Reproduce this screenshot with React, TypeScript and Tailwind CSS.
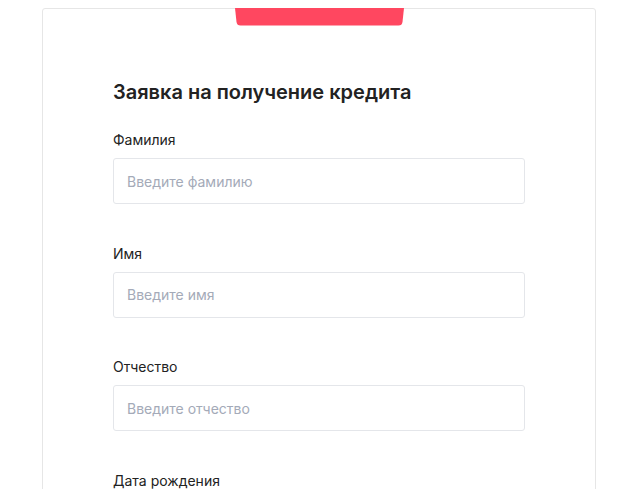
const FIELDS = [
  { label: "Фамилия", placeholder: "Введите фамилию" },
  { label: "Имя", placeholder: "Введите имя" },
  { label: "Отчество", placeholder: "Введите отчество" },
  { label: "Дата рождения", placeholder: "ДД.ММ.ГГГГ" },
];

function Field({ label, placeholder }: { label: string; placeholder: string }) {
  return (
    <div className="mb-[39.5px]">
      <label className="block text-[14px] leading-5 text-[#222]">{label}</label>
      <input
        type="text"
        placeholder={placeholder}
        className="mt-2 block h-[46px] w-[412px] rounded-[3px] border border-[#e4e6ea] bg-white px-[13px] text-[14px] text-[#2b2b2b] outline-none placeholder:text-[#a4aab8]"
      />
    </div>
  );
}

export default function App() {
  return (
    <div className="h-[489px] overflow-hidden bg-white" style={{ fontFamily: "Inter, 'Noto Sans', sans-serif" }}>
      <div className="ml-[42px] mt-2 w-[554px] border border-[#e6e6e6] rounded-t-[3px]">
        {/* red tab sits over the top border */}
        <div className="-mt-px flex justify-center">
          <svg width="169" height="18" viewBox="0 0 169 18" className="ml-px">
            <path d="M0 0 H169 L167.5 14 Q167 17.5 163.5 17.5 H5.5 Q2 17.5 1.5 14 Z" fill="#ff4760" />
          </svg>
        </div>
        <div className="px-[70px] pt-[52px]">
          <h1 className="text-[20px] leading-7 font-semibold text-[#222]">Заявка на получение кредита</h1>
          <div className="mt-6">
            {FIELDS.map((f) => (
              <Field key={f.label} {...f} />
            ))}
          </div>
        </div>
      </div>
    </div>
  );
}
